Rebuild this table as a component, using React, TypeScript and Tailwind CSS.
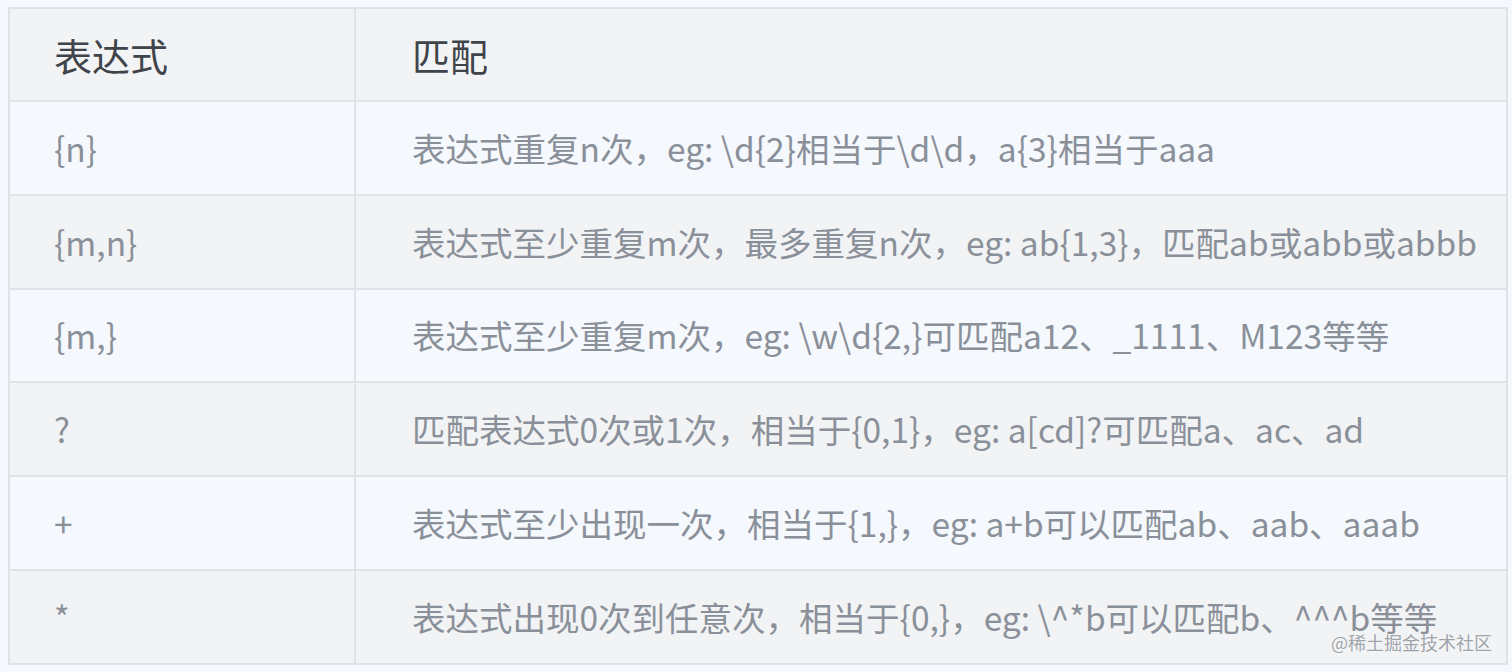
const rows = [
  { expr: "{n}", match: "表达式重复n次，eg: \\d{2}相当于\\d\\d，a{3}相当于aaa" },
  { expr: "{m,n}", match: "表达式至少重复m次，最多重复n次，eg: ab{1,3}，匹配ab或abb或abbb" },
  { expr: "{m,}", match: "表达式至少重复m次，eg: \\w\\d{2,}可匹配a12、_1111、M123等等" },
  { expr: "?", match: "匹配表达式0次或1次，相当于{0,1}，eg: a[cd]?可匹配a、ac、ad" },
  { expr: "+", match: "表达式至少出现一次，相当于{1,}，eg: a+b可以匹配ab、aab、aaab" },
  { expr: "*", match: "表达式出现0次到任意次，相当于{0,}，eg: \\^*b可以匹配b、^^^b等等" },
];

const App = () => {
  return (
    <div
      className="relative w-[1512px] h-[672px] overflow-hidden bg-[#f5f8fc] pl-[8px] pt-[7px]"
      style={{ fontFamily: '"Noto Sans CJK SC", "Noto Sans", sans-serif' }}
    >
      <table className="border-collapse table-fixed w-[1498px]">
        <colgroup>
          <col className="w-[346px]" />
          <col className="w-[1152px]" />
        </colgroup>
        <thead>
          <tr className="h-[93px] bg-[#f2f3f5]">
            <th className="border-2 border-[#dfe2e6] pl-[44px] text-left font-normal text-[38px] text-[#3f434a]">
              表达式
            </th>
            <th className="border-2 border-[#dfe2e6] pl-[56px] text-left font-normal text-[38px] text-[#3f434a]">
              匹配
            </th>
          </tr>
        </thead>
        <tbody>
          {rows.map((row, i) => (
            <tr
              key={row.expr}
              className={i % 2 === 0 ? "h-[93.8px] bg-[#f5f8fd]" : "h-[93.8px] bg-[#f2f3f5]"}
            >
              <td className="border-2 border-[#dfe2e6] pl-[44px] text-[33.5px] text-[#8a9099]">
                {row.expr}
              </td>
              <td className="border-2 border-[#dfe2e6] pl-[56px] text-[33.5px] text-[#8a9099] whitespace-nowrap">
                {row.match}
              </td>
            </tr>
          ))}
        </tbody>
      </table>

      {/* watermark */}
      <div className="absolute left-[1331px] top-[633px] text-[18px] leading-none text-[#9ea3aa] [text-shadow:0_0_2px_#ffffff]">
        @稀土掘金技术社区
      </div>
    </div>
  );
};

export default App;
